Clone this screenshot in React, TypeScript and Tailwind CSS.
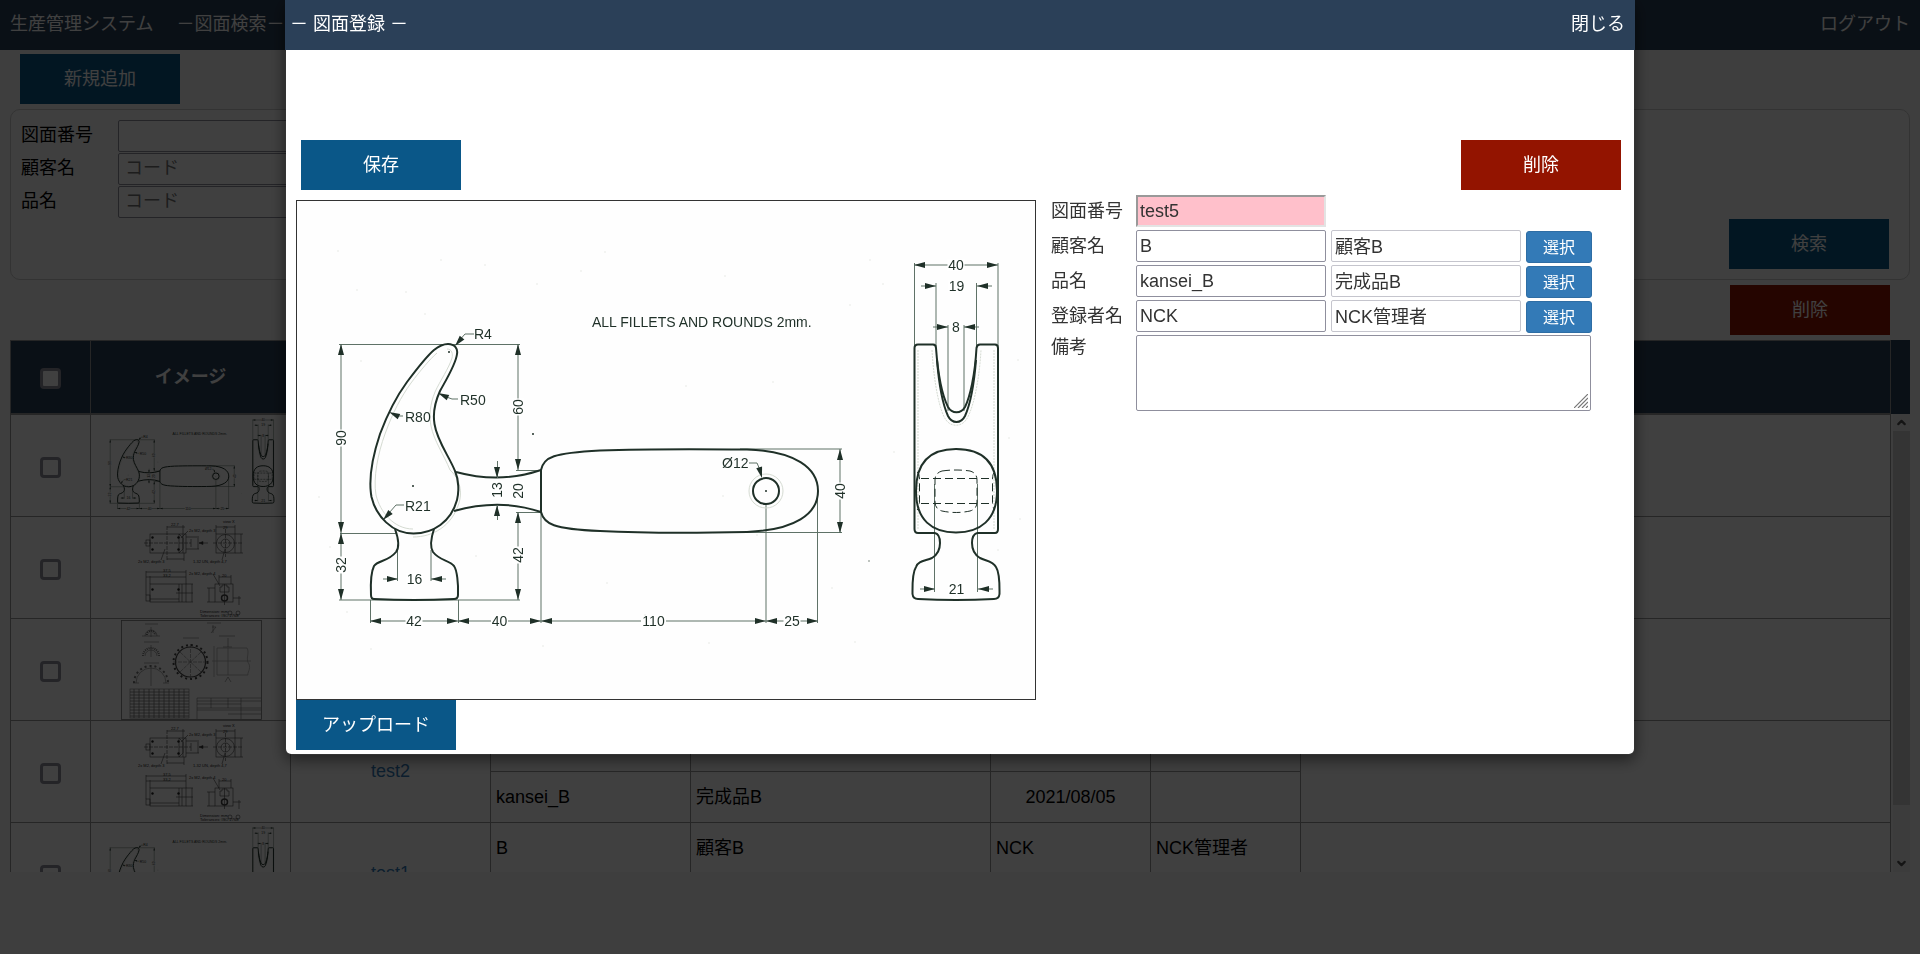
import { useState } from 'react';
import type { ReactNode } from 'react';
import { ChevronDown, ChevronUp } from 'lucide-react';

type DrawingKind = 'hammer' | 'camera' | 'gear';

interface DrawingRow {
  no: string;
  image: DrawingKind;
  customerCode: string;
  customerName: string;
  itemCode: string;
  itemName: string;
  userCode: string;
  userName: string;
  date: string;
}

const base = {
  customerCode: 'B',
  customerName: '顧客B',
  itemCode: 'kansei_B',
  itemName: '完成品B',
  userCode: 'NCK',
  userName: 'NCK管理者',
  date: '2021/08/05',
};

const rows: DrawingRow[] = [
  { no: 'test5', image: 'hammer', ...base },
  { no: 'test4', image: 'camera', ...base },
  { no: 'test3', image: 'gear', ...base },
  { no: 'test2', image: 'camera', ...base },
  { no: 'test1', image: 'hammer', ...base },
];

const INK = '#1f3028';
const THIN = '#5f7267';

/* ---------- drawing helpers ---------- */

function Arrow({ x, y, angle }: { x: number; y: number; angle: number }) {
  return (
    <polygon
      points="0,0 -11,-3 -11,3"
      fill={INK}
      transform={`translate(${x} ${y}) rotate(${angle})`}
    />
  );
}

function Label({ x, y, text, vertical }: { x: number; y: number; text: string; vertical?: boolean }) {
  const w = text.length * 8 + 1;
  return (
    <g transform={`translate(${x} ${y})${vertical ? ' rotate(-90)' : ''}`}>
      <rect x={-w / 2} y={-6} width={w} height={12} fill="#fff" />
      <text x={0} y={5} textAnchor="middle" fontSize={14} fill={INK}>
        {text}
      </text>
    </g>
  );
}

// horizontal dimension; "outside" puts the arrows outside the extension lines
function HDim({ x1, x2, y, text, outside }: { x1: number; x2: number; y: number; text: string; outside?: boolean }) {
  return (
    <g>
      {outside ? (
        <path d={`M${x1 - 15} ${y}H${x1}M${x2} ${y}H${x2 + 15}`} stroke={THIN} />
      ) : (
        <path d={`M${x1} ${y}H${x2}`} stroke={THIN} />
      )}
      <Arrow x={x1} y={y} angle={outside ? 0 : 180} />
      <Arrow x={x2} y={y} angle={outside ? 180 : 0} />
      <Label x={(x1 + x2) / 2} y={y} text={text} />
    </g>
  );
}

function VDim({ x, y1, y2, text, at }: { x: number; y1: number; y2: number; text: string; at: number }) {
  return (
    <g>
      <path d={`M${x} ${y1}V${y2}`} stroke={THIN} />
      <Arrow x={x} y={y1} angle={-90} />
      <Arrow x={x} y={y2} angle={90} />
      <Label x={x} y={at} text={text} vertical />
    </g>
  );
}

function HammerDrawing({ viewBox, className, outline = 2 }: { viewBox: string; className: string; outline?: number }) {
  return (
    <svg
      viewBox={viewBox}
      className={className}
      fill="none"
      strokeWidth={outline / 2}
      fontFamily="'Liberation Sans', Arial, sans-serif"
    >
      {/* extension lines */}
      <path
        d="M339 344.5H520M340 533.5H397M339 600H520M516 470.500H541M516 512.500H541M740 449H842M740 532.500H842
           M370.500 600V623M458.500 600V623M541 512V623M766 505V623M817.500 491V623M397.500 550V581M431 550V581
           M914.500 263V346M998 263V346M936 283V346M976.500 283V346M948 325V411M964 325V411M934.500 484V592M977.500 484V592"
        stroke={THIN}
      />

      {/* fillet shading */}
      <g stroke="#d5dbd2">
        <path d="M447 349C452 349 453 354 452 358C449 368 440 381 435 392C430 404 429 416 431 426C434 441 444 455 450 470C461 480 462 493 459 503C452 526 433 537 413 537M413 529C394 529 380 512 376 495C373 478 378 453 385 434C393 412 401 397 411 383C420 371 430 359 437 353" />
        <circle cx={766} cy={491} r={17} />
        <path d="M918 350V530M994 350V530M932 350C934 385 940 412 946 420C951 427 961 427 966 420C972 412 979 385 981 350" strokeDasharray="2 1" />
      </g>

      {/* front view */}
      <g stroke={INK} strokeWidth={outline}>
        <path d="M448 344C455 344 458 349 457 354C456 364 446 380 440 391C435 402 433 415 434.500 424C437 441 449 456 455 471C459 480 459 492 457 500C451 522 433 533.500 413.500 533.500C392 533.500 376 516 371.500 497C368 478 374 452 380 434C389 410 396 397 407 382C416 370 427 356 434 350C439 346 443 344 448 344Z" />
        <path d="M395 529C399 540 399 548 396 552C388 562 378 560 374 566C371 572 370.500 584 371 595Q371 599 374 599Q414 601 454 599Q458 599 458 595C458.500 584 457 570 454 566C449 560 440 561 433 552C430 547 431 538 434 529" />
        <path d="M456 472Q500 484 541 470M454 511Q500 498 541 512" />
        <path d="M541 470C544 457 553 453 600 450.500C640 449 700 449 747 449.500C795 451 818 468 818 491C818 514 795 530 747 532C700 533 640 533 600 531C553 529 544 524 541 512Z" />
        <circle cx={766} cy={491} r={13} />
      </g>

      {/* side view */}
      <g stroke={INK} strokeWidth={outline}>
        <path d="M935 533H918Q914.500 533 914.500 529V348Q914.500 344.500 918 344.500H933Q936 344.500 936 348C938 375 943 397 948 407C952 414 961 414 965 407C970 397 975 375 976.500 348Q977 344.500 980 344.500H995Q998 344.500 998 348V529Q998 533 995 533H977" />
        <path d="M937 360C939 385 943 405 948 416C952 424 961 424 965 416C970 405 974 385 976 360" />
        <path d="M956 449C980 449 997 460 997 491C997 520 980 532.500 956 532.500C932 532.500 916 520 916 491C916 460 932 449 956 449Z" />
        <path d="M935 533C939 534 940 537 940 543C940 550 937 555 932 558C925 561 918 561 916 567C912 573 912.500 585 912.500 594Q913 599 918 599Q956 601 994 599Q999 599 999.500 594C999.500 585 1000 573 996 567C993 561 986 561 980 558C975 555 972 550 972 543C972 537 974 534 977 533" />
      </g>
      <g stroke={INK} strokeDasharray="8 4">
        <path d="M921 478.500H993M921 503.500H993" />
        <path d="M942 471Q956 469 970 471Q977 473 977 480V502Q977 509 970 511Q956 514 942 511Q935 509 935 502V480Q935 473 942 471Z" />
        <path d="M917 472Q919.500 473 919.500 480V502Q919.500 508 917 510M995 472Q992.500 473 992.500 480V502Q992.500 508 995 510" />
      </g>

      {/* dimensions */}
      <HDim x1={914} x2={998} y={265} text="40" />
      <HDim x1={936} x2={977} y={286} text="19" outside />
      <HDim x1={948} x2={964} y={327} text="8" outside />
      <HDim x1={935} x2={978} y={589} text="21" outside />
      <HDim x1={398} x2={431} y={579} text="16" outside />
      <HDim x1={370} x2={458} y={621} text="42" />
      <HDim x1={458} x2={541} y={621} text="40" />
      <HDim x1={541} x2={766} y={621} text="110" />
      <HDim x1={766} x2={818} y={621} text="25" />
      <VDim x={341} y1={344} y2={533} text="90" at={438} />
      <VDim x={341} y1={533} y2={600} text="32" at={565} />
      <VDim x={518} y1={344} y2={470} text="60" at={407} />
      <VDim x={518} y1={512} y2={600} text="42" at={555} />
      <VDim x={840} y1={449} y2={533} text="40" at={491} />
      <path d="M497.500 461V478M497.500 505V520" stroke={THIN} />
      <Arrow x={497} y={478} angle={90} />
      <Arrow x={497} y={505} angle={-90} />
      <Label x={497} y={490} text="13" vertical />
      <Label x={518} y={491} text="20" vertical />

      {/* leaders and notes */}
      <path d="M474 334H465L458 342M458 399H452L444 396M403 416H398M404 505H396L389 513M749 463H757L760 470" stroke={THIN} />
      <Arrow x={455} y={346} angle={130} />
      <Arrow x={438} y={393} angle={205} />
      <Arrow x={389} y={412} angle={205} />
      <Arrow x={383} y={520} angle={133} />
      <Arrow x={762} y={478} angle={75} />
      <g fontSize={14} fill={INK}>
        <text x={474} y={339}>R4</text>
        <text x={460} y={405}>R50</text>
        <text x={405} y={422}>R80</text>
        <text x={405} y={511}>R21</text>
        <text x={722} y={468}>Ø12</text>
        <text x={592} y={327}>ALL FILLETS AND ROUNDS 2mm.</text>
        <circle cx={766} cy={491} r={1} />
        <circle cx={413} cy={486} r={1} />
        <circle cx={449} cy={352} r={1} />
        <circle cx={533} cy={434} r={1} />
      </g>

      {/* paper specks */}
      <g fill="#eff1ee">
        {[[338, 251], [441, 260], [485, 265], [581, 271], [357, 290], [406, 292], [537, 284], [361, 361], [425, 314], [605, 252], [725, 276], [870, 260], [883, 284], [850, 305], [800, 318], [686, 386], [773, 382], [1018, 360], [1009, 438], [894, 452], [723, 496], [832, 588], [709, 643], [855, 642], [757, 535], [330, 547], [319, 497], [476, 556], [607, 583], [645, 615], [347, 612], [371, 649], [543, 646], [1020, 519], [998, 550]].map(([x, y]) => (
          <circle key={`${x}-${y}`} cx={x} cy={y} r={1} />
        ))}
        <circle cx={869} cy={561} r={1} fill="#a9b0aa" />
      </g>
    </svg>
  );
}

function CameraDrawing({ className }: { className: string }) {
  return (
    <svg viewBox="98 517 184 100" className={className} fill="none" stroke="#444" strokeWidth={0.6} fontFamily="'Liberation Sans', Arial, sans-serif">
      <rect x={149} y={533} width={36} height={19} />
      <rect x={145} y={539} width={4} height={6} />
      <path d="M178 533V552L182 548V537L178 533M182 533V552" />
      <path d="M143 542H190M166 525V559M224.500 528V556M212 542H241" strokeDasharray="4 1" />
      <path d="M166 526H184M182 524V533M166 558H183M183 552V560M190 538V546M197 537V548M185 536H198M185 548H198M215 526H234M215 524V533M234 524V533M240 533V552M234 533H242M234 552H242" />
      <path d="M198 542H207M198 542L202 540.500V543.500Z" fill="#222" />
      <rect x={215} y={533} width={19} height={19} />
      <circle cx={224.5} cy={542.5} r={9} />
      <circle cx={224.5} cy={542.5} r={4.500} />
      <path d="M180 537L187 530M160 559L164 548M221 559L224 548" />
      <rect x={149} y={583} width={36} height={18} />
      <rect x={145} y={594} width={4} height={6} />
      <path d="M149 598H178M178 583V601M181 583V601M145 571H185M145 576H185M145 570V594M149 575V583M185 569V583M185 583H192M185 601H192M191 583V601M175 592H192" />
      <rect x={214} y={583} width={18} height={18} />
      <path d="M219 591V586H221V584H226V586H228V591ZM218 576H230M218 574V583M230 574V583M208 587V601M206 587H214M206 601H214M238 595V604M232 597H240M212 573L219 585M223.500 583V604" />
      <circle cx={223.5} cy={597} r={3} strokeWidth={1.500} />
      <circle cx={229} cy={612} r={2} />
      <circle cx={237} cy={612} r={2} />
      <g fill="#222" stroke="none">
        <circle cx={151.5} cy={536.5} r={1.200} />
        <circle cx={151.5} cy={548.5} r={1.200} />
        <circle cx={177.5} cy={536.5} r={1.200} />
        <circle cx={177.5} cy={548.5} r={1.200} />
        <circle cx={151.5} cy={588.5} r={1.200} />
        <circle cx={177.5} cy={588.5} r={1.200} />
        <g fontSize={4}>
          <text x={170} y={525}>22,7</text>
          <text x={222} y={522}>view X</text>
          <text x={222} y={528}>29</text>
          <text x={188} y={531}>2x M2, depth 3</text>
          <text x={137} y={562}>2x M2, depth 3</text>
          <text x={192} y={562}>1-32 UN, depth 4,7</text>
          <text x={162} y={571}>37,5</text>
          <text x={162} y={576}>33,2</text>
          <text x={188} y={574}>2x M2, depth 4</text>
          <text x={221} y={576}>20</text>
          <text x={199} y={612}>Dimension: mm</text>
          <text x={199} y={616}>Tolerances: ISO 2768</text>
        </g>
      </g>
    </svg>
  );
}

function GearDrawing({ className }: { className: string }) {
  return (
    <svg viewBox="98 619 184 100" className={className} fill="none" stroke="#777" strokeWidth={0.6}>
      <rect x={120.5} y={619.5} width={140} height={99} strokeWidth={0.800} />
      <circle cx={189.5} cy={661} r={15} stroke="#444" strokeWidth={1.200} />
      <circle cx={189.5} cy={661} r={17} stroke="#444" strokeWidth={2} strokeDasharray="2 3" />
      <path d="M172 661H207M189.500 643V679M179 651L200 671M200 651L179 671" strokeDasharray="4 1" />
      <path d="M141 635H159M144 635A6 6 0 0 1 156 635M150 626V636" />
      <path d="M146 634A4 4 0 0 1 154 634M142 655A8 8 0 0 1 158 655" strokeDasharray="1 1" strokeWidth={2} />
      <path d="M133 682A17 17 0 0 1 167 682" strokeWidth={2} strokeDasharray="2 3" />
      <path d="M135 682A15 15 0 0 1 165 682M132 682H138M162 682H168M144 655A6 6 0 0 1 156 655M150 644V656M150 664V685" />
      <path d="M144 623H157M143 641H158M143 662H158M182 637H198M206 622H220M218 635H234" />
      <path d="M212 624V632M211 626H215M210 632L215 626M227 637V646M222 646H231M224 681L227 676L230 681" />
      <path d="M216 647H246C249 652 244 658 248 663C250 668 246 672 247 674H216ZM227 647V674M213 645V676M211 660H250" stroke="#999" />
      <rect x={129} y={688} width={59} height={29} />
      <path d="M129 691H188M129 694H188M129 697H188M129 700H188M129 703H188M129 706H188M129 709H188M129 712H188M129 715H188M133 688V717M138 688V717M143 688V717M148 688V717M153 688V717M158 688V717M163 688V717M168 688V717M173 688V717M178 688V717M183 688V717" strokeWidth={0.800} />
      <path d="M196 718V697H260M196 700H260M196 703H240M196 707H260M196 709H260M210 697V707M227 697V707M240 697V718M227 713H260" />
    </svg>
  );
}

function Thumbnail({ kind }: { kind: DrawingKind }) {
  const size = 'mx-auto block h-[100px] w-[184px]';
  if (kind === 'hammer') return <HammerDrawing viewBox="296 250 740 400" outline={4} className={size} />;
  if (kind === 'camera') return <CameraDrawing className={size} />;
  return <GearDrawing className={size} />;
}

/* ---------- controls ---------- */

function ActionButton({ color, children, onClick }: { color: 'blue' | 'red'; children: ReactNode; onClick?: () => void }) {
  const bg = color === 'blue' ? 'bg-[#0a5788]' : 'bg-[#931400]';
  return (
    <button type="button" onClick={onClick} className={`h-[50px] w-[160px] text-lg text-white ${bg}`}>
      {children}
    </button>
  );
}

function CheckBox({ label }: { label: string }) {
  return (
    <input
      type="checkbox"
      aria-label={label}
      className="mx-auto mt-[3px] block size-[21px] appearance-none rounded border-3 border-[#8f8f9d] bg-white"
    />
  );
}

function SearchField({ id, label, placeholder }: { id: string; label: string; placeholder?: string }) {
  return (
    <div className="flex items-start">
      <label htmlFor={id} className="w-[97px] leading-[30px] text-black">
        {label}
      </label>
      <input
        id={id}
        placeholder={placeholder}
        className="h-8 w-[190px] rounded-xs border border-[#8f8f9d] bg-white px-1.5 pb-0.5 placeholder:text-[#757575]"
      />
    </div>
  );
}

function SelectField({ id, label, code, name }: { id: string; label: string; code: string; name: string }) {
  return (
    <div className="flex h-[33px] items-start gap-[5px]">
      <label htmlFor={id} className="w-20 leading-8 whitespace-nowrap">
        {label}
      </label>
      <input
        id={id}
        defaultValue={code}
        className="h-8 w-[190px] rounded-xs border border-[#8f8f9d] bg-white px-[3px]"
      />
      <input
        aria-label={`${label}（名称）`}
        value={name}
        readOnly
        className="h-8 w-[190px] rounded-xs border border-[#c5c5cd] bg-white px-[3px] pb-0.5"
      />
      <button
        type="button"
        className="mt-px h-8 w-[66px] rounded-[3px] border border-[#2e6da4] bg-[#337ab7] pt-0.5 text-base text-white"
      >
        選択
      </button>
    </div>
  );
}

function Columns() {
  return (
    <colgroup>
      <col className="w-20" />
      <col className="w-[200px]" />
      <col className="w-[200px]" />
      <col className="w-[200px]" />
      <col className="w-[300px]" />
      <col className="w-[160px]" />
      <col className="w-[150px]" />
      <col />
    </colgroup>
  );
}

function DrawingTable() {
  const line = 'border border-[#999]';
  return (
    <div className="mx-2.5 mt-[5px]">
      <div className="bg-[#2b4058] pr-[19px]">
        <table className="w-full table-fixed border-collapse font-bold text-white">
          <Columns />
          <thead>
            <tr className="h-[73px]">
              <th className={line}><CheckBox label="すべて選択" /></th>
              <th className={line}>イメージ</th>
              <th className={line}>図面番号</th>
              <th className={line} colSpan={2}>顧客 / 品名</th>
              <th className={line} colSpan={2}>登録者 / 登録日</th>
              <th className={line}>備考</th>
            </tr>
          </thead>
        </table>
      </div>
      <div className="flex h-[calc(100vh-496px)] gap-0.5 overflow-hidden">
        <div className="flex-1 overflow-hidden">
          <table className="w-full table-fixed border-collapse bg-white text-black">
            <Columns />
            {rows.map((r) => (
              <tbody key={r.no}>
                <tr className="h-[51px]">
                  <td rowSpan={2} className={line}><CheckBox label={r.no} /></td>
                  <td rowSpan={2} className={line}><Thumbnail kind={r.image} /></td>
                  <td rowSpan={2} className={`${line} pb-0.5 text-center`}>
                    <a href="#" className="text-[#337ab7]">{r.no}</a>
                  </td>
                  <td className={`${line} px-[5px]`}>{r.customerCode}</td>
                  <td className={`${line} px-[5px]`}>{r.customerName}</td>
                  <td className={`${line} px-[5px]`}>{r.userCode}</td>
                  <td className={`${line} px-[5px]`}>{r.userName}</td>
                  <td rowSpan={2} className={line} />
                </tr>
                <tr className="h-[51px]">
                  <td className={`${line} px-[5px]`}>{r.itemCode}</td>
                  <td className={`${line} px-[5px]`}>{r.itemName}</td>
                  <td className={`${line} text-center`}>{r.date}</td>
                  <td className={line} />
                </tr>
              </tbody>
            ))}
          </table>
        </div>
        {/* scroll bar */}
        <div className="flex w-[17px] flex-col bg-[#f0f0f0] text-[#505050]">
          <button type="button" aria-label="上へ" className="flex h-[17px] items-center justify-center">
            <ChevronUp size={13} strokeWidth={4} />
          </button>
          <div className="grow-[15] bg-[#cdcdcd]" />
          <div className="grow-[2]" />
          <button type="button" aria-label="下へ" className="flex h-[17px] items-center justify-center">
            <ChevronDown size={13} strokeWidth={4} />
          </button>
        </div>
      </div>
    </div>
  );
}

function RegisterModal({ onClose }: { onClose: () => void }) {
  return (
    <div className="fixed inset-0 flex items-start justify-center bg-black/75">
      <div
        role="dialog"
        aria-label="図面登録"
        className="w-[1350px] max-w-full rounded-md text-[#333] shadow-[0_5px_15px_rgba(0,0,0,0.5)]"
      >
        <div className="flex h-[50px] items-center justify-between bg-[#2b4058] pr-2.5 pb-0.5 pl-[5px] text-white">
          <h2>－ 図面登録 －</h2>
          <button type="button" onClick={onClose}>閉じる</button>
        </div>

        <div className="rounded-b-md border border-t-0 border-black/20 bg-white bg-clip-padding px-2.5 pt-[90px] pb-1">
          <div className="flex justify-between pr-[3px] pl-[5px]">
            <ActionButton color="blue">保存</ActionButton>
            <ActionButton color="red">削除</ActionButton>
          </div>

          <div className="flex gap-[15px] pt-[5px]">
            <div className="pt-[5px]">
              <div className="h-[500px] w-[740px] border border-[#333] bg-[#fefefe]">
                <HammerDrawing viewBox="297 201 738 498" className="block h-full w-full" />
              </div>
              <ActionButton color="blue">アップロード</ActionButton>
            </div>

            <form className="flex flex-col gap-0.5">
              <div className="flex h-[33px] items-start gap-[5px]">
                <label htmlFor="drawing-no" className="w-20 leading-8 whitespace-nowrap">
                  図面番号
                </label>
                <input
                  id="drawing-no"
                  defaultValue="test5"
                  className="h-8 w-[190px] border-2 border-t-[#999] border-r-[#e3e3e3] border-b-[#e3e3e3] border-l-[#999] bg-[#ffc0cb] px-0.5"
                />
              </div>
              <SelectField id="customer" label="顧客名" code="B" name="顧客B" />
              <SelectField id="item" label="品名" code="kansei_B" name="完成品B" />
              <SelectField id="user" label="登録者名" code="NCK" name="NCK管理者" />
              <div className="flex items-start gap-[5px]">
                <label htmlFor="note" className="w-20 leading-6">
                  備考
                </label>
                <div className="relative">
                  <textarea
                    id="note"
                    className="block h-[76px] w-[455px] resize-none rounded-xs border border-[#8f8f9d] bg-white p-[3px]"
                  />
                  <svg viewBox="0 0 14 14" className="absolute right-[3px] bottom-[3px] size-3.5" stroke="#777" strokeWidth={1.2}>
                    <path d="M0 14L14 0M4 14L14 4M8 14L14 8M12 14L14 12" />
                  </svg>
                </div>
              </div>
            </form>
          </div>
        </div>
      </div>
    </div>
  );
}

export default function App() {
  const [open, setOpen] = useState(true);

  return (
    <div className="h-screen overflow-hidden bg-[#f6f6f6] font-['Liberation_Sans','Noto_Sans_CJK_JP',sans-serif] text-lg text-[#333]">
      <header className="flex h-[50px] items-center justify-between bg-[#2b4058] px-2.5 pb-0.5 text-white">
        <div className="flex gap-[23px]">
          <h1>生産管理システム</h1>
          <span>－図面検索－</span>
        </div>
        <a href="#">ログアウト</a>
      </header>

      <div className="px-5 pt-1">
        <ActionButton color="blue" onClick={() => setOpen(true)}>新規追加</ActionButton>
      </div>

      <div className="mx-2.5 mt-[5px] flex items-end justify-between rounded-[10px] border border-[#ccc] bg-[#fcfcfc] pt-2.5 pr-5 pb-2.5 pl-2.5">
        <div className="flex flex-col gap-px pb-[51px]">
          <SearchField id="s-no" label="図面番号" />
          <SearchField id="s-customer" label="顧客名" placeholder="コード" />
          <SearchField id="s-item" label="品名" placeholder="コード" />
        </div>
        <ActionButton color="blue">検索</ActionButton>
      </div>

      <div className="flex justify-end pt-[5px] pr-[30px]">
        <ActionButton color="red">削除</ActionButton>
      </div>

      <DrawingTable />

      {open && <RegisterModal onClose={() => setOpen(false)} />}
    </div>
  );
}
